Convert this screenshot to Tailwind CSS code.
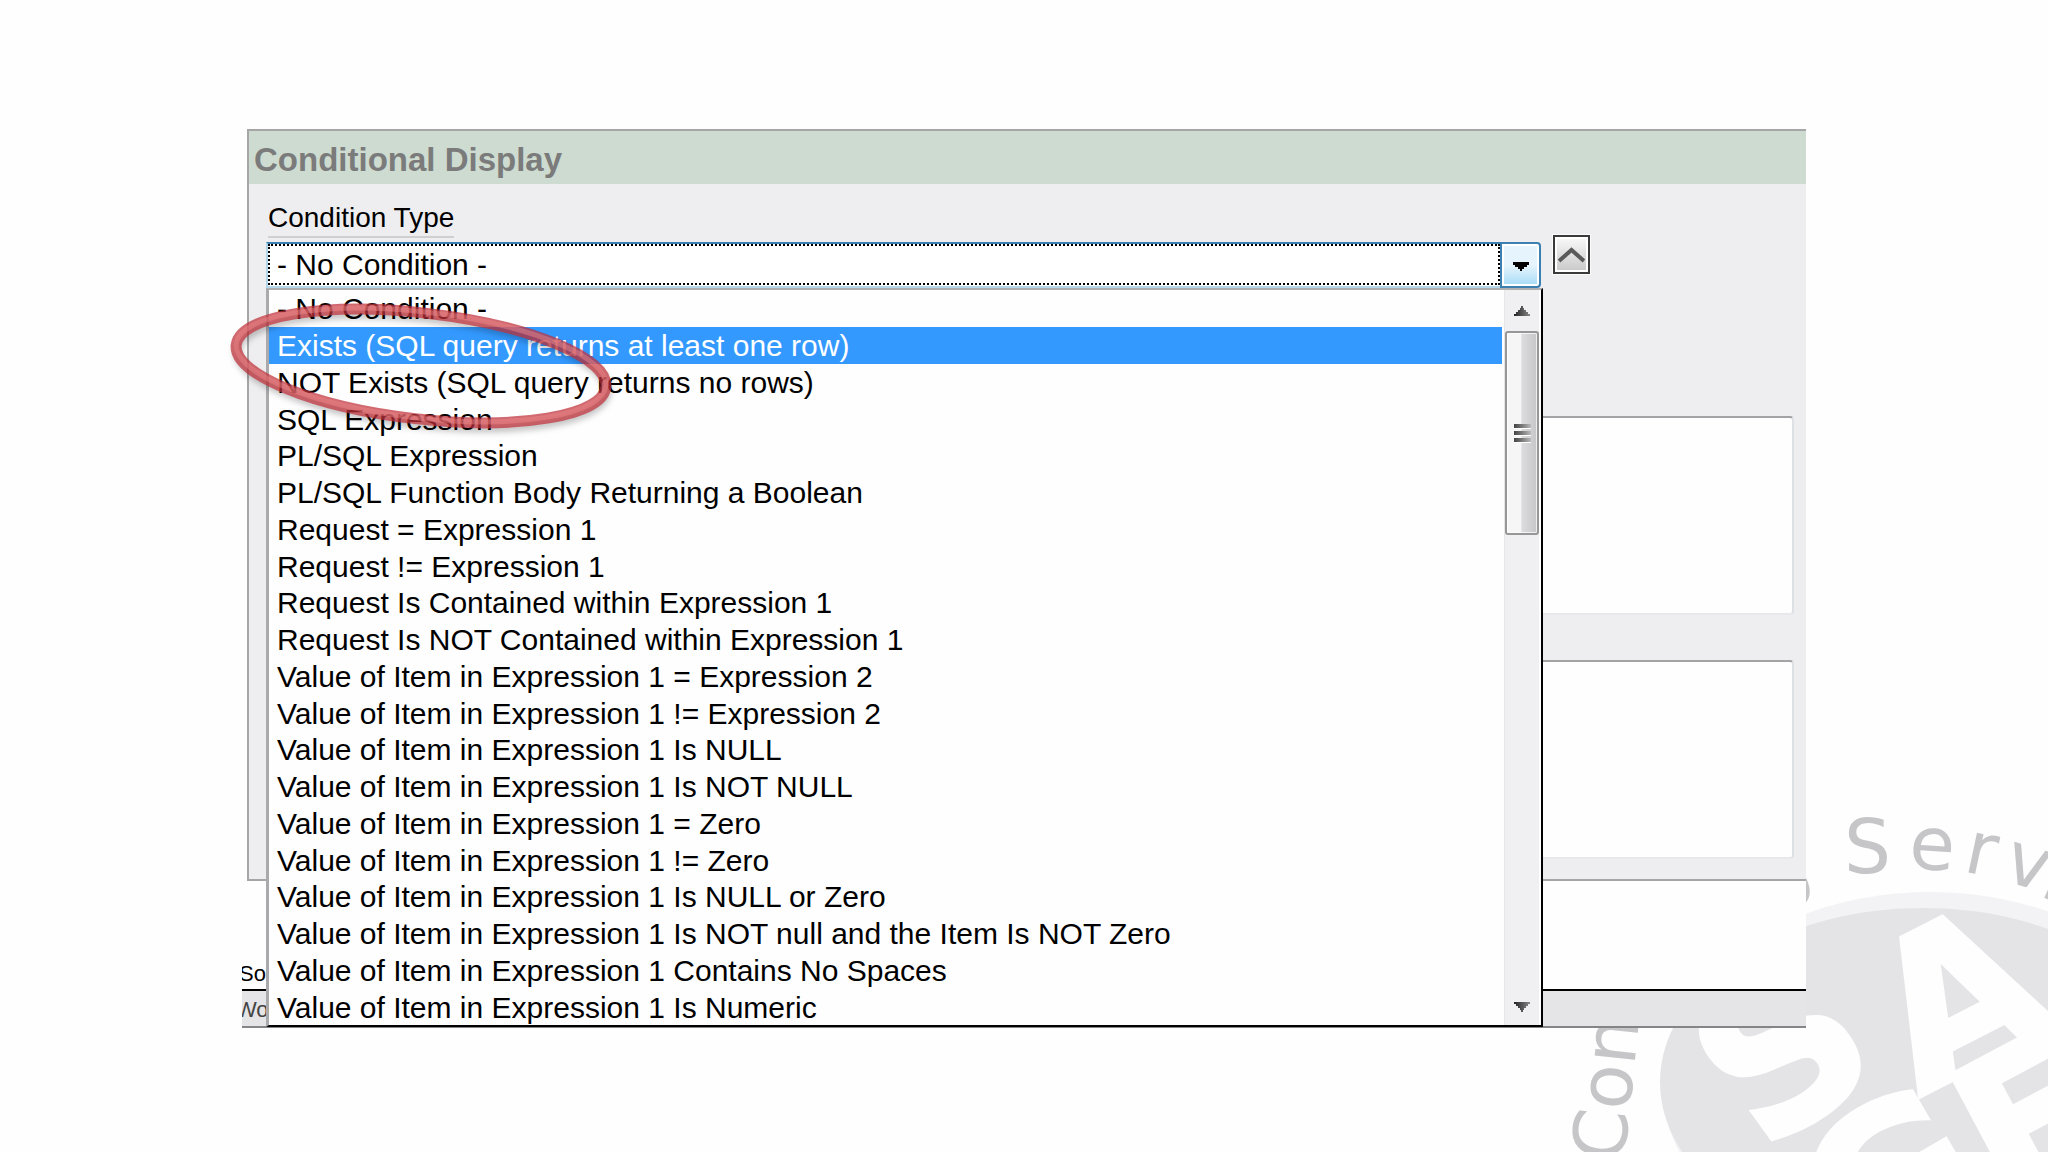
<!DOCTYPE html>
<html lang="en">
<head>
  <meta charset="utf-8">
  <meta name="viewport" content="width=device-width, initial-scale=1">
  <title>Conditional Display</title>
  <script src="https://cdn.jsdelivr.net/npm/@tailwindcss/browser@4"></script>
</head>
<body class="relative min-h-screen overflow-hidden bg-[#fefefe] font-['Liberation_Sans',Arial,sans-serif] text-black">
  <!-- Watermark seal -->
  <svg class="absolute right-0 bottom-0 h-[352px] w-[508px] font-['DejaVu_Sans',sans-serif]" viewBox="1540 800 508 352" aria-hidden="true">
    <ellipse cx="1930" cy="1084" rx="268" ry="192" fill="#f3f2f4"/>
    <ellipse cx="1923" cy="1082" rx="263" ry="174" fill="#e4e3e6"/>
    <g fill="#c6c5c8" font-size="74">
      <text x="1844 1908 1962 2001 2038" y="873 868 871 880 895" rotate="0 4 12 16 24">Servi</text>
      <text x="1776" y="915" transform="rotate(-20 1776 915)">o</text>
      <text x="1624" y="1163" transform="rotate(-84 1624 1163)">Con</text>
    </g>
    <g fill="#fefefe" font-weight="bold" stroke="#fefefe" stroke-width="4" text-anchor="middle">
      <text x="1780" y="1125" font-size="214" transform="rotate(-36 1780 1047)">S</text>
      <text x="1956" y="1069" font-size="206" transform="rotate(-27 1956 994)">A</text>
      <text x="1890" y="1256" font-size="206" transform="rotate(-30 1890 1181)">G</text>
      <text x="2032" y="1192" font-size="206" transform="rotate(-28 2032 1117)">E</text>
    </g>
  </svg>

  <main class="relative mx-[242px] mt-[129px] bg-[#fefefe]">
    <!-- Conditional Display region -->
    <section class="ml-[5px] border-2 border-r-0 border-[#a6a6a6] bg-[#eeedef]">
      <h1 class="bg-[#cddbd0] pt-1.5 pb-0.5 pl-[5px] text-[33px] leading-[45px] font-bold text-[#7b7b7b]">Conditional Display</h1>

      <div class="pt-4 pr-3 pb-5 pl-[19px]">
        <label for="condition-type" class="block w-fit border-b-2 border-[#cfcfcf] text-[28px] leading-9">Condition Type</label>

        <div class="-ml-0.5 mt-1 flex items-start gap-3 pr-[204px]">
          <div class="relative flex-1">
            <div class="flex h-[46px]">
              <div class="flex-1 border-2 border-r-0 border-t-[#3c7fb1] border-b-[#b4d6ea] border-l-[#b4d6ea] bg-white pb-px">
                <select id="condition-type" class="h-full w-full appearance-none border-2 border-dotted border-black bg-white pl-[7px] text-[30px] leading-9 outline-none">
                  <option>- No Condition -</option>
                </select>
              </div>
              <span class="flex w-[41px] items-center justify-center rounded-r-[4px] border-2 border-[#3c7fb1] bg-linear-to-b from-[#e6f5fd] from-50% to-[#a6daf6] inset-ring-2 inset-ring-white">
                <svg class="mt-1 h-[10px] w-[18px]" viewBox="0 0 18 10"><path d="M1 0h16v3h-2v2h-3v2h-2v2H8V7H6V5H3V3H1z"/></svg>
              </span>
            </div>

            <!-- Open list -->
            <div class="absolute top-full left-0 -right-0.5 z-10 flex h-[739px] border-t-2 border-r-2 border-b-2 border-l-[3px] border-t-[#b0b0b0] border-r-black border-b-black border-l-[#aaaaad] bg-[#fefefe]">
              <ul role="listbox" aria-label="Condition Type" class="mr-0.5 flex flex-1 flex-col text-[30px] leading-[34px] [&>li]:flex [&>li]:flex-1 [&>li]:items-center [&>li]:pt-0.5 [&>li]:pl-2">
                <li role="option">- No Condition -</li>
                <li role="option" aria-selected="true" class="bg-[#3399ff] text-white">Exists (SQL query returns at least one row)</li>
                <li role="option">NOT Exists (SQL query returns no rows)</li>
                <li role="option">SQL Expression</li>
                <li role="option">PL/SQL Expression</li>
                <li role="option">PL/SQL Function Body Returning a Boolean</li>
                <li role="option">Request = Expression 1</li>
                <li role="option">Request != Expression 1</li>
                <li role="option">Request Is Contained within Expression 1</li>
                <li role="option">Request Is NOT Contained within Expression 1</li>
                <li role="option">Value of Item in Expression 1 = Expression 2</li>
                <li role="option">Value of Item in Expression 1 != Expression 2</li>
                <li role="option">Value of Item in Expression 1 Is NULL</li>
                <li role="option">Value of Item in Expression 1 Is NOT NULL</li>
                <li role="option">Value of Item in Expression 1 = Zero</li>
                <li role="option">Value of Item in Expression 1 != Zero</li>
                <li role="option">Value of Item in Expression 1 Is NULL or Zero</li>
                <li role="option">Value of Item in Expression 1 Is NOT null and the Item Is NOT Zero</li>
                <li role="option">Value of Item in Expression 1 Contains No Spaces</li>
                <li role="option">Value of Item in Expression 1 Is Numeric</li>
              </ul>

              <!-- Scrollbar -->
              <div class="mr-0.5 flex w-[35px] flex-col border-l border-[#e6e5e7] bg-[#f0eff1]">
                <div class="flex h-[41px] items-center justify-center">
                  <svg class="h-[10px] w-4" viewBox="0 0 16 10">
                    <defs><linearGradient id="arrow"><stop stop-color="#222"/><stop offset="1" stop-color="#888"/></linearGradient></defs>
                    <path d="M0 10V8h2V6h2V4h2V2h1V0h2v2h1v2h2v2h2v2h2v2z" fill="url(#arrow)"/>
                  </svg>
                </div>
                <div class="flex h-[204px] items-center justify-center rounded-[3px] border-2 border-[#979797] bg-linear-to-r from-[#f6f6f6] from-45% via-[#dcdcde] via-50% to-[#c6c6c8] inset-ring inset-ring-white/70">
                  <div class="flex flex-col gap-0.5">
                    <i class="block h-[5px] w-[17px] border-b border-white bg-linear-to-r from-[#444] to-[#bbb]"></i>
                    <i class="block h-[5px] w-[17px] border-b border-white bg-linear-to-r from-[#444] to-[#bbb]"></i>
                    <i class="block h-[5px] w-[17px] border-b border-white bg-linear-to-r from-[#444] to-[#bbb]"></i>
                  </div>
                </div>
                <div class="flex-1"></div>
                <div class="flex h-9 items-center justify-center">
                  <svg class="h-[10px] w-4" viewBox="0 0 16 10"><path d="M0 0v2h2v2h2v2h2v2h1v2h2V8h1V6h2V4h2V2h2V0z" fill="url(#arrow)"/></svg>
                </div>
              </div>
            </div>
          </div>

          <button type="button" aria-label="Collapse" class="-mt-[7px] flex h-[39px] w-[37px] items-center justify-center border-2 border-[#3a3a3a] bg-linear-to-b from-[#fafafa] to-[#c8c8c8] inset-ring-2 inset-ring-white outline outline-white/80">
            <svg class="h-4 w-[27px]" viewBox="0 0 27 16" fill="none" stroke="#5a5a5a" stroke-width="4"><path d="M1 14 13.500 3 26 14"/></svg>
          </button>
        </div>

        <textarea aria-label="Expression 1" class="mt-32 block h-[199px] w-full resize-none rounded-[4px] border-2 border-t-[#a3a3a5] border-r-[#dde0e4] border-b-[#e6e8ea] border-l-[#dde0e4] bg-[#fefefe]"></textarea>
        <textarea aria-label="Expression 2" class="mt-[45px] block h-[199px] w-full resize-none rounded-[4px] border-2 border-t-[#a3a3a5] border-r-[#dde0e4] border-b-[#e6e8ea] border-l-[#dde0e4] bg-[#fefefe]"></textarea>
      </div>
    </section>

    <!-- Status bar -->
    <footer class="overflow-hidden text-[22px]">
      <p class="h-[110px] border-b-2 border-black pt-[81px] -indent-[3px] leading-6">So</p>
      <p class="h-[37px] border-b-2 border-[#858587] bg-[#e5e4e7] -indent-[6px] leading-[38px] text-[#444]">Wo</p>
    </footer>

    <!-- Red highlight ring -->
    <svg class="pointer-events-none absolute top-[161px] -left-[22px] z-20 h-[152px] w-[404px]" viewBox="220 290 404 152" fill="none" aria-hidden="true">
      <defs><filter id="soft" x="-10%" y="-20%" width="120%" height="140%"><feGaussianBlur stdDeviation="3"/></filter></defs>
      <g transform="rotate(6.500 421 366)">
        <ellipse cx="423" cy="371" rx="186" ry="53" stroke="#000" stroke-opacity=".25" stroke-width="8" filter="url(#soft)"/>
        <ellipse cx="421" cy="366" rx="186" ry="53" stroke="#c0303a" stroke-opacity=".72" stroke-width="11"/>
        <ellipse cx="421" cy="365" rx="186" ry="53" stroke="#f08c8c" stroke-opacity=".45" stroke-width="5"/>
      </g>
    </svg>
  </main>
</body>
</html>
